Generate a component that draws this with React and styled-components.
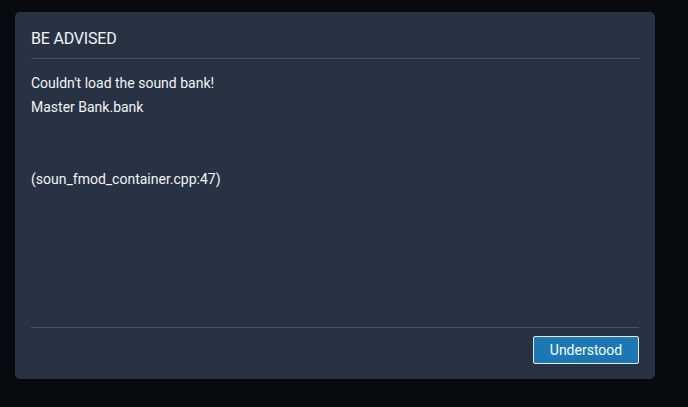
import React from 'react';
import styled, {createGlobalStyle} from 'styled-components';

const GlobalStyle = createGlobalStyle`
    html, body {
        margin: 0;
        padding: 0;
        background: #070a0f;
        height: 100%;
    }
    #root {
        min-height: 100%;
    }
`;

const Page = styled.div`
    width: 688px;
    height: 407px;
    padding: 12px 0 0 15px;
    box-sizing: border-box;
    font-family: Roboto, 'Liberation Sans', sans-serif;
`;

const Dialog = styled.div`
    width: 640px;
    height: 367px;
    background: #273242;
    border-radius: 5px;
    padding: 0 16px;
    box-sizing: border-box;
    display: flex;
    flex-direction: column;
    color: #f2f4f6;
`;

const Header = styled.div`
    padding: 15px 0 7px;
    font-size: 16px;
    line-height: 24px;
    letter-spacing: -0.2px;
    text-transform: uppercase;
    border-bottom: 1px solid #4a5562;
`;

const Body = styled.div`
    flex: 1;
    padding-top: 12px;
    font-size: 14px;
    line-height: 24px;
    white-space: pre-line;
`;

const Footer = styled.div`
    display: flex;
    justify-content: flex-end;
    border-top: 1px solid #4a5562;
    padding: 8px 0 15px;
`;

const Button = styled.button`
    height: 28px;
    width: 106px;
    background: #1a78b6;
    color: #fff;
    border: 1px solid #e8ecef;
    border-radius: 2px;
    font-family: Roboto, 'Liberation Sans', sans-serif;
    font-size: 14px;
    padding: 0;
    cursor: pointer;
`;

export default function App() {
    const message = "Couldn't load the sound bank!\nMaster Bank.bank\n\n\n(soun_fmod_container.cpp:47)";

    return (
        <Page>
            <GlobalStyle />
            <Dialog>
                <Header>Be advised</Header>
                <Body>{message}</Body>
                <Footer>
                    <Button>Understood</Button>
                </Footer>
            </Dialog>
        </Page>
    );
}
